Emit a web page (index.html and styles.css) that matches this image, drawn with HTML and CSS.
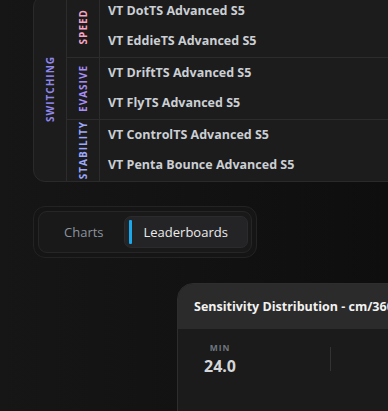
FILE: index.html
```html
<!DOCTYPE html>
<html lang="en">
<head>
    <meta charset="UTF-8">
    <meta name="viewport" content="width=device-width, initial-scale=1.0">
    <title>leaderboards</title>
    <link rel="stylesheet" href="styles.css">
</head>
<body>
    <div class="page">
        <div class="matrix">
            <div class="super-col">
                <span class="vlabel switching">SWITCHING</span>
            </div>
            <div class="groups">
                <div class="group">
                    <div class="cat-col"><span class="vlabel speed">SPEED</span></div>
                    <div class="rows">
                        <div class="row">VT DotTS Advanced S5</div>
                        <div class="row">VT EddieTS Advanced S5</div>
                    </div>
                </div>
                <div class="group">
                    <div class="cat-col"><span class="vlabel evasive">EVASIVE</span></div>
                    <div class="rows">
                        <div class="row">VT DriftTS Advanced S5</div>
                        <div class="row">VT FlyTS Advanced S5</div>
                    </div>
                </div>
                <div class="group">
                    <div class="cat-col"><span class="vlabel stability">STABILITY</span></div>
                    <div class="rows">
                        <div class="row">VT ControlTS Advanced S5</div>
                        <div class="row">VT Penta Bounce Advanced S5</div>
                    </div>
                </div>
            </div>
        </div>

        <div class="tabs-wrap">
            <div class="tabs">
                <button class="tab">Charts</button>
                <button class="tab active"><span class="tab-bar"></span>Leaderboards</button>
            </div>
        </div>

        <div class="dist-card">
            <div class="dist-head">Sensitivity Distribution - cm/360</div>
            <div class="dist-body">
                <div class="stat">
                    <span class="stat-label">MIN</span>
                    <span class="stat-value">24.0</span>
                </div>
                <div class="stat-divider"></div>
            </div>
        </div>
    </div>
</body>
</html>
```

FILE: styles.css
```css
body {
    margin: 0;
    height: 411px;
    overflow: hidden;
    background: linear-gradient(90deg, #161616, #0e0e0e);
    font-family: "Open Sans", "Noto Sans", sans-serif;
    color: #fff;
}
.page {
    padding-left: 33px;
    margin-top: -5px;
}
.matrix {
    display: flex;
    width: 420px;
    background-color: #1c1c1c;
    border: 1px solid #2a2a2a;
    border-radius: 12px;
}
.super-col {
    width: 32px;
    border-right: 1px solid #2c2c2c;
    display: flex;
    align-items: center;
    justify-content: center;
}
.vlabel {
    writing-mode: vertical-rl;
    transform: rotate(180deg);
    font-size: 10px;
    font-weight: 700;
    letter-spacing: 1px;
}
.switching { color: #8f86ea; }
.speed { color: #f7a4c6; }
.evasive { color: #a68ef4; }
.stability { color: #9ca8fc; }
.groups {
    flex: 1;
}
.group {
    display: flex;
    border-bottom: 1px solid #2c2c2c;
}
.group:last-child {
    border-bottom: none;
}
.cat-col {
    width: 32px;
    border-right: 1px solid #2c2c2c;
    display: flex;
    align-items: center;
    justify-content: center;
}
.rows {
    flex: 1;
}
.row {
    height: 28.5px;
    display: flex;
    align-items: center;
    padding: 0 0 2px 8px;
    font-size: 12.5px;
    font-weight: 700;
    color: #cbcfd4;
}
.tabs-wrap {
    display: inline-block;
    margin-top: 24px;
    padding: 4px;
    background-color: #151515;
    border: 1px solid #232323;
    border-radius: 12px;
}
.tabs {
    display: flex;
    gap: 3px;
    padding: 4px 3px 4px 8px;
    background-color: #191919;
    border: 1px solid #262626;
    border-radius: 9px;
}
.tab {
    display: flex;
    align-items: center;
    height: 32px;
    padding: 0 16px;
    font-family: inherit;
    font-size: 13px;
    color: #8b949e;
    background: none;
    border: 1px solid transparent;
    border-radius: 7px;
}
.tab.active {
    padding: 0 19px 0 4px;
    color: #ececec;
    background-color: #242427;
    border-color: #2b2b2e;
}
.tab-bar {
    width: 3px;
    height: 24px;
    margin-right: 12px;
    border-radius: 1px;
    background-color: #1aa9ee;
}
.dist-card {
    margin: 25px 0 0 144px;
    width: 400px;
    height: 200px;
    border: 1px solid #2e2e2e;
    border-radius: 16px;
    overflow: hidden;
    background-color: #1b1b1b;
}
.dist-head {
    height: 45px;
    display: flex;
    align-items: center;
    padding-left: 16px;
    background-color: #2b2b2b;
    font-size: 12.5px;
    font-weight: 700;
    color: #f2f2f2;
}
.dist-body {
    display: flex;
    align-items: flex-start;
    padding-top: 13px;
}
.stat {
    display: flex;
    flex-direction: column;
    align-items: center;
    width: 36px;
    margin-left: 24px;
}
.stat-label {
    font-size: 8.5px;
    font-weight: 700;
    letter-spacing: 1px;
    color: #70767e;
}
.stat-value {
    margin-top: 2px;
    font-size: 16px;
    font-weight: 700;
    color: #d4d6d8;
}
.stat-divider {
    width: 1px;
    height: 24px;
    margin: 5px 0 0 92px;
    background-color: #333;
}
```
